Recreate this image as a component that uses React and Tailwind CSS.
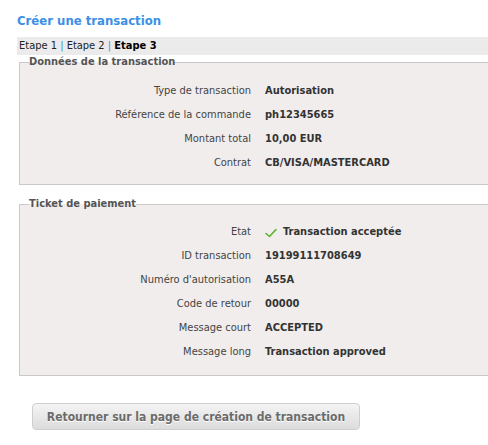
import React from 'react';

const transaction = [
  { label: 'Type de transaction', value: 'Autorisation' },
  { label: 'Référence de la commande', value: 'ph12345665' },
  { label: 'Montant total', value: '10,00 EUR' },
  { label: 'Contrat', value: 'CB/VISA/MASTERCARD' },
];

const ticket = [
  { label: 'Etat', value: 'Transaction acceptée', ok: true },
  { label: 'ID transaction', value: '19199111708649' },
  { label: "Numéro d'autorisation", value: 'A55A' },
  { label: 'Code de retour', value: '00000' },
  { label: 'Message court', value: 'ACCEPTED' },
  { label: 'Message long', value: 'Transaction approved' },
];

const Check = () => (
  <svg width="12" height="10" viewBox="0 0 12 10" className="mr-[6px] mt-[2px]">
    <path d="M1 5.5 L4.5 8.5 L11 1.5" fill="none" stroke="#5cb030" strokeWidth="1.6" strokeLinecap="round" strokeLinejoin="round" />
  </svg>
);

const Block = ({ title, rows, pad }) => (
  <fieldset className={`ml-[19px] w-[520px] border border-[#cbc8c8] bg-[#f1eded] pl-[9px] ${pad}`}>
    <legend className="font-bold text-[#555] leading-[14px]">{title}</legend>
    <div className="grid grid-cols-[222px_1fr] gap-x-[14px]">
      {rows.map((r) => (
        <React.Fragment key={r.label}>
          <div className="text-right text-[#444] leading-[24px]">{r.label}</div>
          <div className="flex items-center font-bold text-[#333] leading-[24px]">
            {r.ok && <Check />}
            {r.value}
          </div>
        </React.Fragment>
      ))}
    </div>
  </fieldset>
);

export default function App() {
  return (
    <div
      className="w-[488px] h-[445px] overflow-hidden bg-white text-[11px]"
      style={{ fontFamily: '"DejaVu Sans Condensed", "DejaVu Sans", sans-serif' }}
    >
      <h1 className="pl-[17px] pt-[13px] text-[13px] font-bold text-[#3c8fe6] leading-[16px]">
        Créer une transaction
      </h1>
      <div className="ml-[17px] mt-[8px] bg-[#ebebeb] pl-[2px] leading-[18px] text-[#222]">
        Etape 1 <span className="text-[#3c8fe6]">|</span> Etape 2 <span className="text-[#3c8fe6]">|</span>{' '}
        <span className="font-bold text-black">Etape 3</span>
      </div>
      <div>
        <Block title="Données de la transaction" rows={transaction} pad="pt-[10px] pb-[9px]" />
      </div>
      <div className="mt-[12px]">
        <Block title="Ticket de paiement" rows={ticket} pad="pt-[9px] pb-[11px]" />
      </div>
      <div className="pl-[32px] pt-[27px]">
        <button className="h-[27px] w-[328px] rounded-[4px] border border-[#cfcfcf] bg-gradient-to-b from-[#f4f4f4] to-[#dcdcdc] text-[12px] font-bold text-[#6b6b6b] [text-shadow:0_1px_0_#fff]">
          Retourner sur la page de création de transaction
        </button>
      </div>
    </div>
  );
}
